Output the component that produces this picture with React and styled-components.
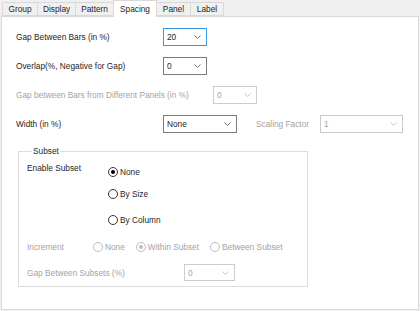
import React from 'react';
import styled, { createGlobalStyle } from 'styled-components';

const GlobalStyle = createGlobalStyle`
  html, body {
    margin: 0;
    padding: 0;
    background: #f0f0f0;
  }
  body {
    font-family: "Liberation Sans", Arial, sans-serif;
    font-size: 8.3px;
    color: #1e1e1e;
  }
`;

const Window = styled.div`
  width: 420px;
  height: 311px;
  box-sizing: border-box;
  padding: 0 1px 1px 1px;
  display: flex;
  flex-direction: column;
`;

const TabStrip = styled.div`
  display: flex;
  align-items: flex-end;
  height: 16px;
  padding-left: 1px;
  position: relative;
  z-index: 1;
`;

const Tab = styled.div`
  box-sizing: border-box;
  height: ${p => (p.active ? '17px' : '14px')};
  margin-bottom: ${p => (p.active ? '-1px' : '0')};
  padding: ${p => (p.active ? '0 6px 1px' : '0 5px')};
  display: flex;
  align-items: center;
  justify-content: center;
  min-width: ${p => p.w}px;
  background: ${p => (p.active ? '#fff' : '#f0f0f0')};
  border: 1px solid #d9d9d9;
  border-bottom: ${p => (p.active ? 'none' : '1px solid #d9d9d9')};
  margin-left: ${p => (p.first ? '0' : '-1px')};
  white-space: nowrap;
`;

const Panel = styled.div`
  flex: 1;
  background: #fff;
  border: 1px solid #d9d9d9;
  padding: 11px 14px 0 14px;
  display: flex;
  flex-direction: column;
`;

const Rows = styled.div`
  display: flex;
  flex-direction: column;
  gap: 11px;
`;

const Row = styled.div`
  display: flex;
  align-items: center;
  height: ${p => p.h || 18}px;
`;

const Label = styled.span`
  width: ${p => p.w}px;
  flex-shrink: 0;
  white-space: nowrap;
  color: ${p => (p.disabled ? '#a3a3a3' : 'inherit')};
  margin-left: ${p => p.ml || 0}px;
`;

const SelectBox = styled.div`
  box-sizing: border-box;
  width: ${p => p.w}px;
  height: ${p => p.h || 18}px;
  display: flex;
  align-items: center;
  justify-content: space-between;
  padding: 0 5px 0 3px;
  background: #fff;
  border: 1px solid
    ${p => (p.focused ? '#3c95e0' : p.disabled ? '#cccccc' : '#7a7a7a')};
  color: ${p => (p.disabled ? '#a3a3a3' : 'inherit')};
`;

const Chevron = ({ color }) => (
  <svg width="7" height="4" viewBox="0 0 7 4">
    <path d="M0.5 0.5 L3.5 3.5 L6.5 0.5" fill="none" stroke={color} strokeWidth="1" />
  </svg>
);

const Select = ({ value, w, h, focused, disabled }) => (
  <SelectBox w={w} h={h} focused={focused} disabled={disabled}>
    <span>{value}</span>
    <Chevron color={disabled ? '#c4c4c4' : '#707070'} />
  </SelectBox>
);

const GroupBox = styled.fieldset`
  margin: 12px 0 0 2px;
  width: 290px;
  box-sizing: border-box;
  border: 1px solid #dcdcdc;
  padding: 6px 8px 5px 8px;
  min-width: 0;
`;

const Legend = styled.legend`
  padding: 0 1px;
  margin-left: 5px;
  line-height: 12px;
`;

const EnableRow = styled.div`
  display: flex;
  align-items: flex-start;
`;

const RadioList = styled.div`
  display: flex;
  flex-direction: ${p => (p.row ? 'row' : 'column')};
  gap: ${p => p.gap}px;
  margin-top: ${p => p.mt || 0}px;
`;

const RadioItem = styled.label`
  display: flex;
  align-items: center;
  gap: 2px;
  height: 12px;
  margin-top: ${p => p.mt || 0}px;
  color: ${p => (p.disabled ? '#a3a3a3' : 'inherit')};
  white-space: nowrap;
`;

const Circle = styled.span`
  box-sizing: border-box;
  width: 10px;
  height: 10px;
  border-radius: 50%;
  border: 1px solid ${p => (p.disabled ? '#bdbdbd' : '#333')};
  background: #fff;
  display: flex;
  align-items: center;
  justify-content: center;
  &::after {
    content: '';
    display: ${p => (p.checked ? 'block' : 'none')};
    width: 4px;
    height: 4px;
    border-radius: 50%;
    background: ${p => (p.disabled ? '#bdbdbd' : '#000')};
  }
`;

const Radio = ({ label, checked, disabled, mt }) => (
  <RadioItem disabled={disabled} mt={mt}>
    <Circle checked={checked} disabled={disabled} />
    {label}
  </RadioItem>
);

const SubRow = styled.div`
  display: flex;
  align-items: center;
  height: ${p => p.h || 12}px;
  margin-top: ${p => p.mt || 0}px;
`;

export default function App() {
  return (
    <Window>
      <GlobalStyle />
      <TabStrip>
        <Tab first w={36}>Group</Tab>
        <Tab w={36}>Display</Tab>
        <Tab w={36}>Pattern</Tab>
        <Tab active w={41}>Spacing</Tab>
        <Tab w={35}>Panel</Tab>
        <Tab w={34}>Label</Tab>
      </TabStrip>
      <Panel>
        <Rows>
          <Row>
            <Label w={147}>Gap Between Bars (in %)</Label>
            <Select value="20" w={44} focused />
          </Row>
          <Row>
            <Label w={147}>Overlap(%, Negative for Gap)</Label>
            <Select value="0" w={44} />
          </Row>
          <Row>
            <Label w={197} disabled>Gap between Bars from Different Panels (in %)</Label>
            <Select value="0" w={44} disabled />
          </Row>
          <Row>
            <Label w={147}>Width (in %)</Label>
            <Select value="None" w={74} />
            <Label w={64} ml={19} disabled>Scaling Factor</Label>
            <Select value="1" w={83} disabled />
          </Row>
        </Rows>
        <GroupBox>
          <Legend>Subset</Legend>
          <EnableRow>
            <Label w={81}>Enable Subset</Label>
            <RadioList gap={10} mt={3}>
              <Radio label="None" checked />
              <Radio label="By Size" />
              <Radio label="By Column" mt={4} />
            </RadioList>
          </EnableRow>
          <SubRow mt={15}>
            <Label w={66} disabled>Increment</Label>
            <RadioList row gap={11}>
              <Radio label="None" disabled />
              <Radio label="Within Subset" checked disabled />
              <Radio label="Between Subset" disabled />
            </RadioList>
          </SubRow>
          <SubRow mt={11} h={17}>
            <Label w={157} disabled>Gap Between Subsets (%)</Label>
            <Select value="0" w={51} h={17} disabled />
          </SubRow>
        </GroupBox>
      </Panel>
    </Window>
  );
}
